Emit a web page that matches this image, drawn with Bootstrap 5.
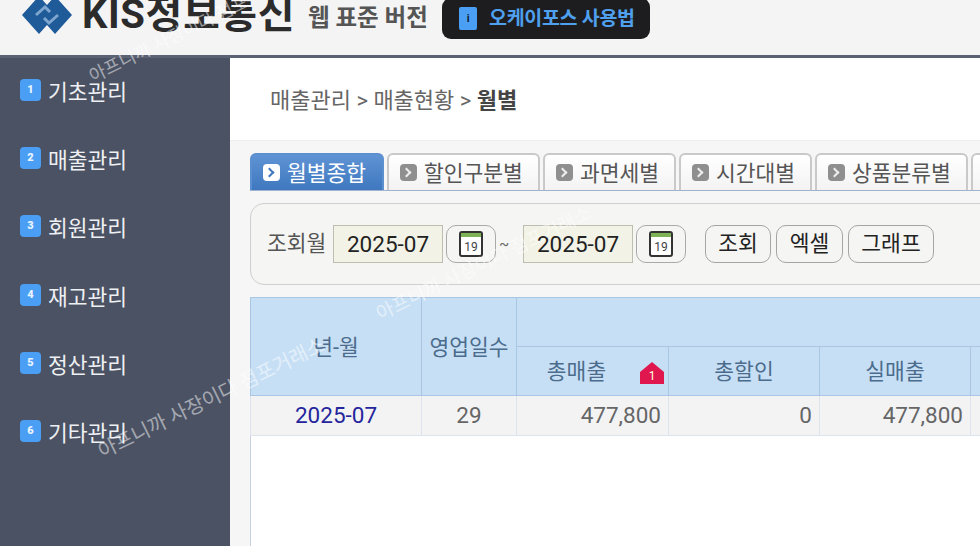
<!DOCTYPE html>
<html lang="ko">
<head>
    <meta charset="UTF-8">
    <title>KIS 정보통신 웹 표준 버전</title>
    <link href="https://cdn.jsdelivr.net/npm/bootstrap@5.3.0/dist/css/bootstrap.min.css" rel="stylesheet">
    <style>
        html, body { height: 546px; overflow: hidden; }
        body { font-family: Roboto, "Noto Sans CJK KR", sans-serif; background: #fff; color: #555; position: relative; }
        .top-bar { height: 58px; background: #f4f4f4; border-bottom: 3px solid #5b6273; padding-left: 22px; overflow: hidden; }
        .logo-mark { margin-top: -4px; margin-right: 8px; flex: none; }
        .logo-text { font-size: 40px; line-height: 34px; font-weight: 700; color: #2b2b2b; margin-top: -2px; letter-spacing: .6px; white-space: nowrap; width: 218px; }
        .logo-sub { font-size: 23.5px; line-height: 36px; font-weight: 700; color: #555; margin-left: 8px; white-space: nowrap; width: 134px; }
        .guide-btn { background: #1d1d1f; color: #4fa0ee; font-size: 19.5px; font-weight: 700; height: 41px; margin-top: -2px; width: 208px; border-radius: 9px; padding-left: 17px; gap: 12px; white-space: nowrap; letter-spacing: -.3px; }
        .guide-ico { width: 18px; height: 23px; background: #4a9ff5; border-radius: 2px; color: #123; font-size: 11px; line-height: 23px; text-align: center; }
        .page-body { height: 488px; }
        .side-menu { width: 230px; flex: none; background: #4b5263; padding: 21px 0 0 20px; }
        .side-item { height: 68.2px; color: #eef0f3; font-size: 21.5px; line-height: 28px; gap: 7px; white-space: nowrap; }
        .side-num { width: 21px; height: 22px; border-radius: 4px; background: #4a9ff5; color: #e8f3ff; font-size: 11px; line-height: 22px; font-weight: 900; text-align: center; flex: none; }
        .main-area { flex: 1; min-width: 0; overflow: hidden; }
        .crumbs { height: 83px; padding: 28px 0 0 40px; font-size: 22px; line-height: 30px; color: #666; background: #fff; border-bottom: 1px solid #eee; white-space: nowrap; }
        .crumbs b { color: #444; }
        .work-area { background: #f6f6f7; height: 405px; padding: 12px 0 0 20px; }
        .tab-row { gap: 3px; height: 38px; flex-wrap: nowrap; width: 800px; border-bottom: 1px solid #9fb4cc; }
        .tab-item { height: 37px; background: linear-gradient(#fff, #f3f3f3); border: 2px solid #c9c9c9; border-bottom: 0; border-radius: 6px 6px 0 0; color: #555; font-size: 21.5px; line-height: 37px; white-space: nowrap; gap: 7px; padding-left: 11px; flex: none; }
        .tab-item.on { background: linear-gradient(#5f93d4, #3f78bf); border-color: #5b8fd0; color: #fff; }
        .tab-ico { width: 17px; height: 17px; margin-top: 9px; border-radius: 4px; background: #8f8f8f; flex: none; position: relative; }
        .tab-ico::before { content: ""; position: absolute; left: 3px; top: 5px; width: 7px; height: 7px; border-top: 2px solid #eee; border-right: 2px solid #eee; transform: rotate(45deg); }
        .tab-item.on .tab-ico { background: #fff; }
        .tab-item.on .tab-ico::before { border-color: #3f78bf; }
        .search-box { width: 800px; height: 82px; margin-top: 12px; padding-left: 16px; background: #f5f5f3; border: 1px solid #cfcfcf; border-radius: 14px; font-size: 20px; white-space: nowrap; }
        .search-label { width: 66px; font-size: 21.5px; color: #555; }
        .month-field { width: 110px; height: 38px; background: #f2f3e6; border: 1px solid #bdbdb0; color: #222; font-size: 22.5px; line-height: 37px; text-align: center; }
        .cal-btn { width: 50px; height: 38px; margin-left: 3px; background: #f5f5f3; border: 1px solid #aaa; border-radius: 10px; }
        .tilde { width: 27px; padding-left: 3px; font-size: 15px; color: #666; }
        .act-btn { height: 38px; padding: 0; width: 67px; margin-right: 5px; background: #f5f5f3; border: 1px solid #a5a5a5; border-radius: 10px; color: #222; font-size: 21.5px; line-height: 34px; }
        .act-btn:first-of-type { margin-left: 19px; width: 66px; }
        .act-btn:last-of-type { width: 86px; }
        .sales-table { table-layout: fixed; width: 840px; margin: 12px 0 0; border-collapse: collapse; font-size: 21.5px; }
        .sales-table th { background: #c7dff5; color: #4b6c8c; font-weight: 400; text-align: center; vertical-align: middle; border: 1px solid #a9c6e2; padding: 3px 0 0; white-space: nowrap; }
        .sales-table td { height: 40px; padding: 0 7px; background: #f3f3f4; color: #666; text-align: right; font-size: 22.5px; border: 1px solid #dde3ec; border-top: 1px solid #a9c6e2; }
        .sales-table .head-top { height: 49px; }
        .sales-table .head-bot { height: 49px; font-size: 21.5px; position: relative; }
        .sales-table .head-flag { padding-right: 32px; }
        .sales-table td.mid { text-align: center; }
        .sales-table td a { color: #25259c; text-decoration: none; }
        .alert-mark { position: absolute; right: 4px; top: 15px; }
        .table-rest { width: 840px; height: 112px; background: #fff; border-left: 1px solid #c9d3e0; }
        .stamp { position: absolute; color: rgba(255,255,255,.5); white-space: nowrap; transform: rotate(-26deg); transform-origin: left bottom; pointer-events: none; }
        .stamp-a { left: 96px; top: 62px; font-size: 18px; }
        .stamp-b { left: 106px; top: 436px; font-size: 20px; }
        .stamp-c { left: 384px; top: 300px; font-size: 19px; }
    </style>
</head>
<body>
    <div class="top-bar d-flex align-items-start">
        <svg class="logo-mark" width="52" height="40" viewBox="0 0 52 40">
            <path d="M0 19 17 0l8 9 8-9 17 19-17 19-8-9-8 9z" fill="#1f5a99"/>
            <path d="M14 19l9-8 5 5M36 19l-9 8-5-5" fill="none" stroke="#7ea6cf" stroke-width="3"/>
        </svg>
        <div class="logo-text">KIS정보통신</div>
        <div class="logo-sub">웹 표준 버전</div>
        <div class="guide-btn d-flex align-items-center">
            <span class="guide-ico">i</span>오케이포스 사용법
        </div>
    </div>

    <div class="page-body d-flex">
        <div class="side-menu">
            <div class="side-item d-flex"><span class="side-num">1</span>기초관리</div>
            <div class="side-item d-flex"><span class="side-num">2</span>매출관리</div>
            <div class="side-item d-flex"><span class="side-num">3</span>회원관리</div>
            <div class="side-item d-flex"><span class="side-num">4</span>재고관리</div>
            <div class="side-item d-flex"><span class="side-num">5</span>정산관리</div>
            <div class="side-item d-flex"><span class="side-num">6</span>기타관리</div>
        </div>

        <div class="main-area">
            <div class="crumbs">매출관리 &gt; 매출현황 &gt; <b>월별</b></div>
            <div class="work-area">
                <div class="tab-row d-flex">
                    <div class="tab-item on d-flex" style="width:134px"><span class="tab-ico"></span>월별종합</div>
                    <div class="tab-item d-flex" style="width:153px"><span class="tab-ico"></span>할인구분별</div>
                    <div class="tab-item d-flex" style="width:133px"><span class="tab-ico"></span>과면세별</div>
                    <div class="tab-item d-flex" style="width:133px"><span class="tab-ico"></span>시간대별</div>
                    <div class="tab-item d-flex" style="width:153px"><span class="tab-ico"></span>상품분류별</div>
                    <div class="tab-item d-flex" style="width:60px"></div>
                </div>

                <div class="search-box d-flex align-items-center">
                    <span class="search-label">조회월</span>
                    <span class="month-field">2025-07</span>
                    <span class="cal-btn d-flex align-items-center justify-content-center">
                        <svg width="26" height="28" viewBox="0 0 26 28"><rect x="2" y="2" width="22" height="24" rx="2" fill="#fff" stroke="#333" stroke-width="2"/><rect x="3" y="3" width="20" height="4" fill="#7db356"/><text x="13" y="21" font-size="12" text-anchor="middle" fill="#444">19</text></svg>
                    </span>
                    <span class="tilde">~</span>
                    <span class="month-field">2025-07</span>
                    <span class="cal-btn d-flex align-items-center justify-content-center">
                        <svg width="26" height="28" viewBox="0 0 26 28"><rect x="2" y="2" width="22" height="24" rx="2" fill="#fff" stroke="#333" stroke-width="2"/><rect x="3" y="3" width="20" height="4" fill="#7db356"/><text x="13" y="21" font-size="12" text-anchor="middle" fill="#444">19</text></svg>
                    </span>
                    <button type="button" class="act-btn">조회</button>
                    <button type="button" class="act-btn">엑셀</button>
                    <button type="button" class="act-btn">그래프</button>
                </div>

                <table class="sales-table">
                    <colgroup>
                        <col style="width:171px"><col style="width:95px"><col style="width:152px"><col style="width:151px"><col style="width:151px"><col style="width:120px">
                    </colgroup>
                    <thead>
                        <tr>
                            <th rowspan="2">년-월</th>
                            <th rowspan="2">영업일수</th>
                            <th colspan="4" class="head-top"></th>
                        </tr>
                        <tr>
                            <th class="head-bot head-flag">총매출
                                <svg class="alert-mark" width="24" height="22" viewBox="0 0 24 22"><path d="M12 0 24 10v12H0V10z" fill="#e0174f"/><text x="12" y="18" font-size="12" text-anchor="middle" fill="#ffd">1</text></svg>
                            </th>
                            <th class="head-bot">총할인</th>
                            <th class="head-bot">실매출</th>
                            <th class="head-bot"></th>
                        </tr>
                    </thead>
                    <tbody>
                        <tr>
                            <td class="mid"><a href="#">2025-07</a></td>
                            <td class="mid">29</td>
                            <td>477,800</td>
                            <td>0</td>
                            <td>477,800</td>
                            <td></td>
                        </tr>
                    </tbody>
                </table>
                <div class="table-rest"></div>
            </div>
        </div>
    </div>

    <!-- 워터마크 -->
    <div class="stamp stamp-a">아프니까 사장이다 점포</div>
    <div class="stamp stamp-b">아프니까 사장이다 점포거래소</div>
    <div class="stamp stamp-c">아프니까 사장이다 점포거래소</div>
</body>
</html>
